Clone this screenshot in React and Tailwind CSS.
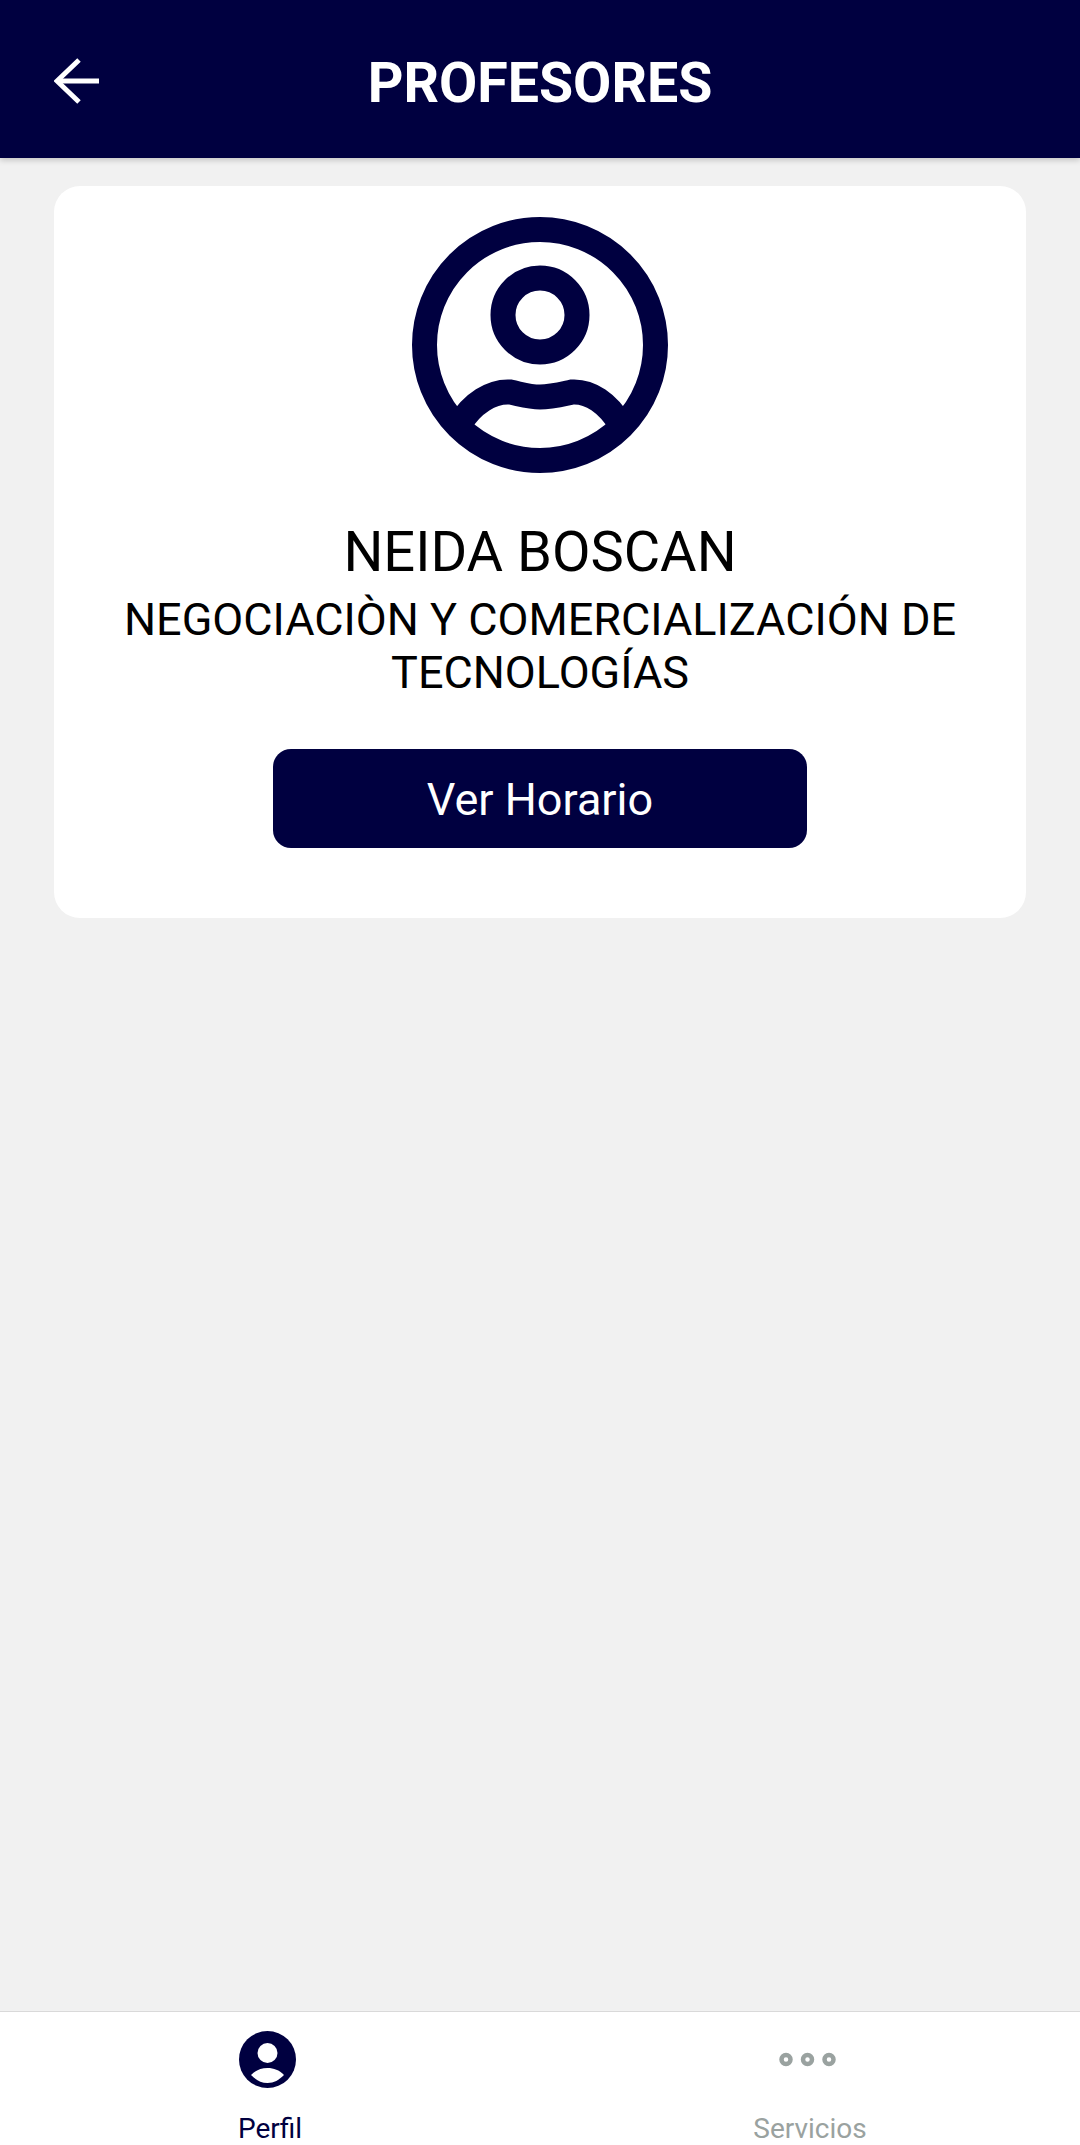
export default function App() {
  return (
    <div className="flex h-[2145px] w-[1080px] flex-col overflow-hidden bg-[#f1f1f1] font-['Roboto',sans-serif]">
      {/* Top bar */}
      <header className="z-10 grid h-[158px] shrink-0 grid-cols-[1fr_auto_1fr] items-center bg-[#000040] shadow-[0_2px_6px_rgba(0,0,0,0.2)]">
        <svg className="ml-[54px] h-[46px] w-[46px] translate-y-[2px] text-white" viewBox="0 0 46 46" fill="none" stroke="currentColor" strokeWidth="5">
          <path d="M45 23H3" />
          <path d="M25 2L3 23L25 44" />
        </svg>
        <h1 className="translate-y-[5px] text-[55.5px] leading-[66px] font-bold text-white">PROFESORES</h1>
        <div />
      </header>

      <main className="flex-1 px-[54px] pt-[28px]">
        {/* Teacher card */}
        <section className="flex flex-col items-center rounded-[26px] bg-white px-[60px] pt-[31px] pb-[70px] text-center text-black">
          <svg className="h-[256px] w-[256px] text-[#000040]" viewBox="0 0 256 256" fill="none" stroke="currentColor" strokeWidth="25">
            <circle cx="128" cy="128" r="115.5" />
            <circle cx="128" cy="98" r="37" />
            <path d="M47 208C60 186 80 174 98 175C112 178 118 180 128 180C138 180 146 178 160 175C178 174 196 186 209 208" />
          </svg>
          <h2 className="mt-[47px] text-[56px] leading-[65px]">NEIDA BOSCAN</h2>
          <p className="mt-[8px] text-[45px] leading-[53px]">NEGOCIACIÒN Y COMERCIALIZACIÓN DE TECNOLOGÍAS</p>
          <button className="mt-[50px] flex h-[99px] w-[534px] items-center justify-center rounded-[18px] bg-[#000040] pt-[2px] text-[45px] text-white">
            Ver Horario
          </button>
        </section>
      </main>

      {/* Bottom tabs */}
      <nav className="grid h-[134px] shrink-0 grid-cols-2 border-t border-[#d9d9d9] bg-white">
        <div className="flex flex-col items-center pt-[19px] text-[#000040]">
          <svg className="h-[57px] w-[57px] -translate-x-[3px]" viewBox="0 0 57 57">
            <circle cx="28.5" cy="28.5" r="28.5" fill="currentColor" />
            <circle cx="28.5" cy="22" r="10" fill="#fff" />
            <path d="M12 44C17 39 22 37 28.5 37C35 37 40 39 45 44C40 49 35 52 28.5 52C22 52 17 49 12 44Z" fill="#fff" />
          </svg>
          <span className="mt-[25px] text-[28px] leading-[32px]">Perfil</span>
        </div>
        <div className="flex flex-col items-center pt-[19px] text-[#9aa2a0]">
          <svg className="h-[57px] w-[57px] -translate-x-[3px]" viewBox="0 0 57 57" fill="none" stroke="currentColor" strokeWidth="4.5">
            <circle cx="7" cy="28.5" r="4.5" />
            <circle cx="28.5" cy="28.5" r="4.5" />
            <circle cx="50" cy="28.5" r="4.5" />
          </svg>
          <span className="mt-[25px] text-[28px] leading-[32px]">Servicios</span>
        </div>
      </nav>
    </div>
  );
}
